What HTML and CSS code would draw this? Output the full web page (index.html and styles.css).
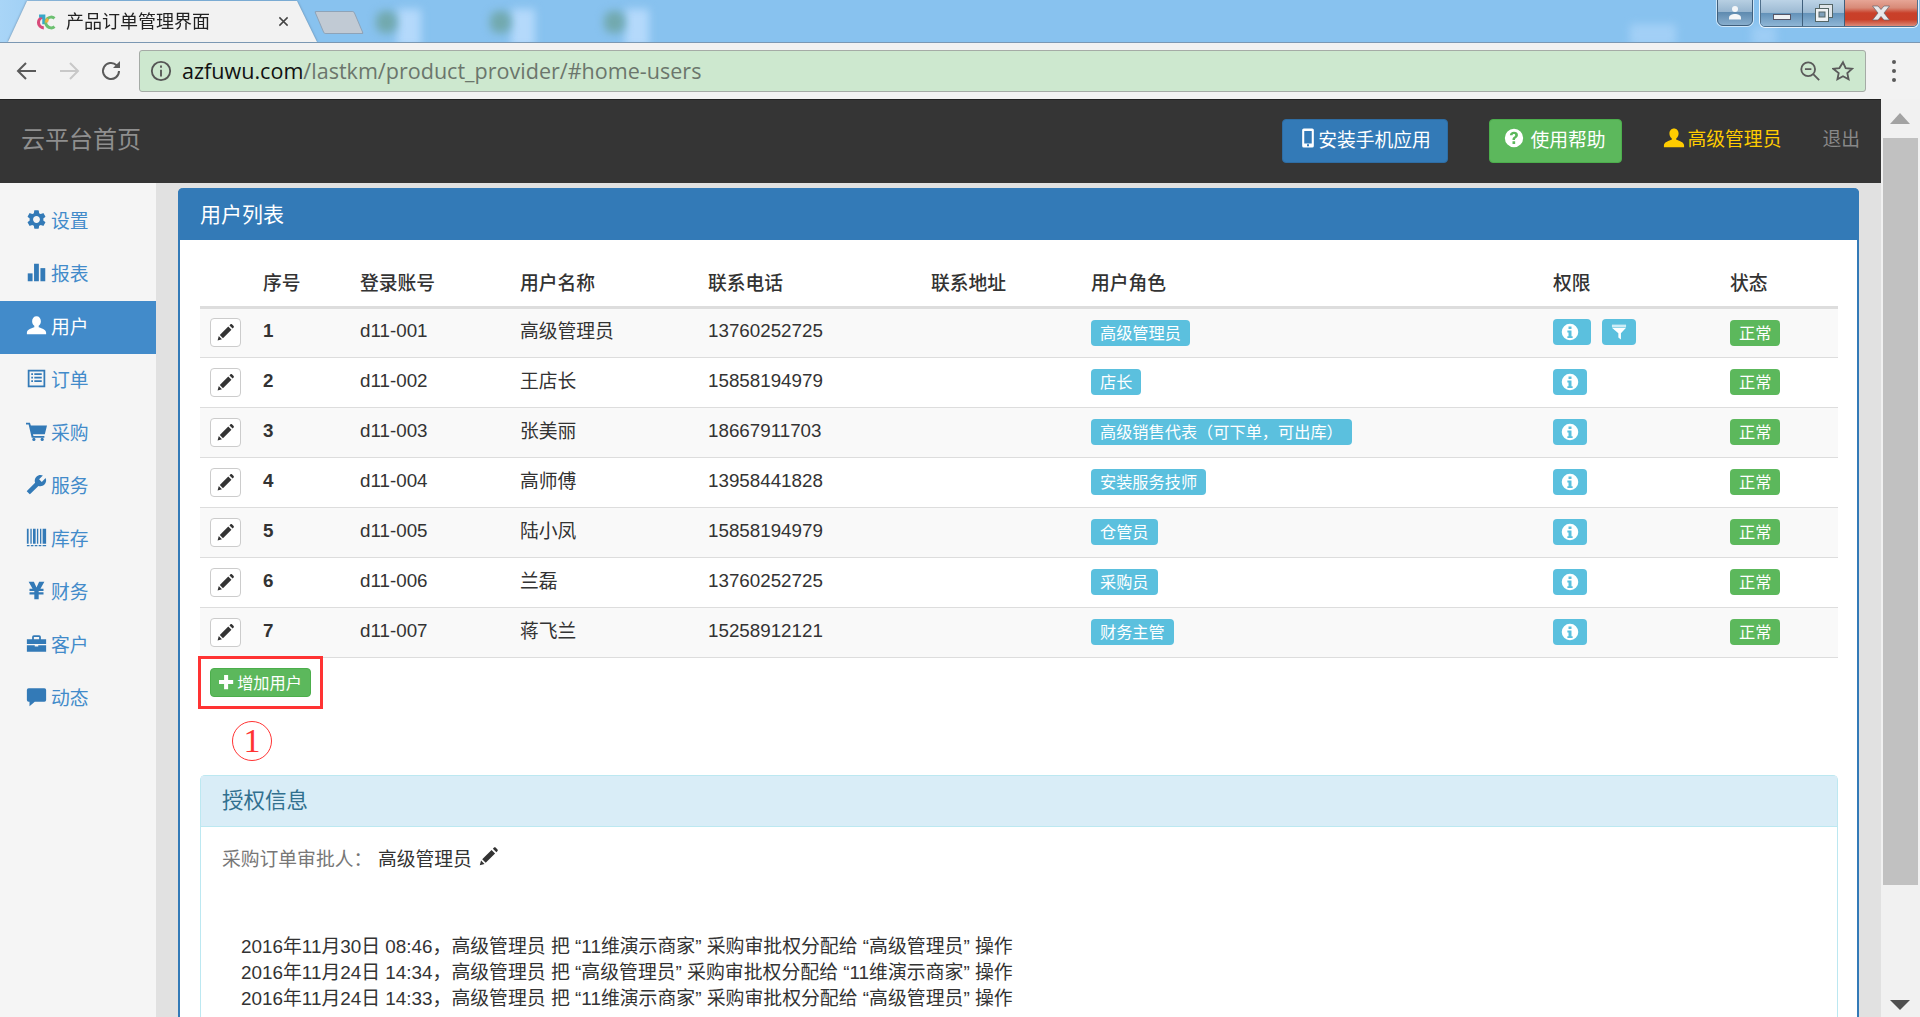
FILE: index.html
```html
<!DOCTYPE html>
<html lang="zh-CN">
<head>
  <meta charset="UTF-8" />
  <title>产品订单管理界面</title>
  <link rel="stylesheet" href="styles.css">
</head>
<body>
  <svg class="sprite" aria-hidden="true">
    <symbol id="i-cog" viewBox="1 1 22 22"><path d="M19.14 12.94c.04-.3.06-.61.06-.94 0-.32-.02-.64-.07-.94l2.03-1.58a.49.49 0 0 0 .12-.61l-1.92-3.32a.488.488 0 0 0-.59-.22l-2.39.96c-.5-.38-1.03-.7-1.62-.94l-.36-2.54a.484.484 0 0 0-.48-.41h-3.84c-.24 0-.43.17-.47.41l-.36 2.54c-.59.24-1.13.57-1.62.94l-2.39-.96c-.22-.08-.47 0-.59.22L2.74 8.87c-.12.21-.08.47.12.61l2.03 1.58c-.05.3-.09.63-.09.94s.02.64.07.94l-2.03 1.58a.49.49 0 0 0-.12.61l1.92 3.32c.12.22.37.29.59.22l2.39-.96c.5.38 1.03.7 1.62.94l.36 2.54c.05.24.24.41.48.41h3.84c.24 0 .44-.17.47-.41l.36-2.54c.59-.24 1.13-.56 1.62-.94l2.39.96c.22.08.47 0 .59-.22l1.92-3.32c.12-.22.07-.47-.12-.61l-2.01-1.58zM12 15.6c-1.98 0-3.6-1.62-3.6-3.6s1.62-3.6 3.6-3.6 3.6 1.62 3.6 3.6-1.62 3.6-3.6 3.6z"/></symbol>
    <symbol id="i-stats" viewBox="0 0 24 24"><rect x="2" y="13" width="5.5" height="9"/><rect x="9.2" y="2" width="5.5" height="20"/><rect x="16.5" y="7" width="5.5" height="15"/></symbol>
    <symbol id="i-user" viewBox="0 0 24 24"><path d="M12 1.500c-3 0-5 2.400-5 5.600 0 2.300 1 4.200 2.500 5.200v1.700c-2.500 1-8.500 2.400-8.500 6.200v1.800h22V20.200c0-3.800-6-5.200-8.500-6.200v-1.700c1.500-1 2.500-2.900 2.500-5.200C17 3.900 15 1.500 12 1.500z"/></symbol>
    <symbol id="i-list" viewBox="0 0 24 24"><path fill-rule="evenodd" d="M2 2h20v20H2zM4 4v16h16V4zM6 6h2v2H6zM9.500 6H18v2H9.500zM6 10h2v2H6zM9.500 10H18v2H9.500zM6 14h2v2H6zM9.500 14H18v2H9.500z"/></symbol>
    <symbol id="i-cart" viewBox="0 0 24 24"><path d="M0 2h4.500l1 3H24l-2.500 10H8l.5 2H21v2H6.500L3 4H0z"/><circle cx="9" cy="21" r="1.800"/><circle cx="18.500" cy="21" r="1.800"/></symbol>
    <symbol id="i-wrench" viewBox="0 0 24 24"><path transform="translate(24 0) scale(-1 1)" d="M22.700 19l-9.100-9.100c.9-2.300.4-5-1.500-6.900-2-2-5-2.400-7.400-1.300L9 6 6 9 1.600 4.700C.4 7.100.9 10.100 2.900 12.100c1.900 1.900 4.600 2.400 6.900 1.500l9.100 9.100c.4.400 1 .4 1.400 0l2.300-2.300c.5-.4.5-1.100.1-1.400z"/></symbol>
    <symbol id="i-barcode" viewBox="0 0 24 24"><path d="M1 2h2v17H1zM5 2h1.500v17H5zM8 2h3v17H8zM12.500 2H14v17h-1.500zM16 2h1.500v17H16zM19 2h4v17h-4zM1 20.500h3V22H1zM5.500 20.500h3V22h-3zM10 20.500h3V22h-3zM14.500 20.500h3V22h-3zM19 20.500h4V22h-4z"/></symbol>
    <symbol id="i-yen" viewBox="0 0 24 24"><path d="M3 2h6l3 6.500L15 2h6l-4.500 8H20v2.500h-5.500V14H20v2.500h-5.500V22h-5v-5.500H4V14h5.500v-1.500H4V10h3.500z"/></symbol>
    <symbol id="i-case" viewBox="0 0 24 24"><path fill-rule="evenodd" d="M9 2.500h6a2 2 0 0 1 2 2V7h6v5.500H1V7h6V4.500a2 2 0 0 1 2-2zM9 4.500V7h6V4.500zM1 14h9v1.500h4V14h9v7.500H1z"/></symbol>
    <symbol id="i-comment" viewBox="0 0 24 24"><path d="M3 2.500h18a2 2 0 0 1 2 2V16a2 2 0 0 1-2 2H10l-6 5v-5H3a2 2 0 0 1-2-2V4.500a2 2 0 0 1 2-2z"/></symbol>
    <symbol id="i-pencil" viewBox="0 0 24 24"><path d="M2 22l1.500-5.500 4 4zM4.800 15.200L15.500 4.500l4 4L8.800 19.200zM17 3l1.300-1.300c.5-.5 1.300-.5 1.800 0l2.200 2.200c.5.500.5 1.300 0 1.800L21 7z"/></symbol>
    <symbol id="i-plus" viewBox="0 0 24 24"><path d="M9 1.500h6V9h7.500v6H15v7.500H9V15H1.500V9H9z"/></symbol>
    <symbol id="i-info" viewBox="0 0 24 24"><path fill-rule="evenodd" d="M12 1a11 11 0 1 0 0 22 11 11 0 0 0 0-22zM10 4.500h4v3.500h-4zM8.500 10H14v7.500h1.500V20h-7v-2.500H10V12.500H8.500z"/></symbol>
    <symbol id="i-filter" viewBox="-2 0 28 25"><path opacity=".7" d="M1 1h22v4H1z"/><path d="M1 6h22l-8 8.500V24l-4-3v-6.500z"/></symbol>
    <symbol id="i-question" viewBox="0 0 24 24"><path fill-rule="evenodd" d="M12 1a11 11 0 1 0 0 22 11 11 0 0 0 0-22zM12 4.500c-3 0-4.800 1.600-5 4.300h3.200c.1-1 .7-1.500 1.700-1.500s1.600.5 1.600 1.300c0 .7-.4 1.100-1.300 1.800-1.400 1-2 1.800-2 3.400v.6h3v-.4c0-.9.3-1.300 1.300-2 1.300-1 2.200-1.900 2.200-3.700 0-2.300-1.900-3.800-4.700-3.800zM10.200 16h3.200v3.200h-3.200z"/></symbol>
    <symbol id="i-phone" viewBox="0 0 24 24"><path fill-rule="evenodd" d="M7 0.500h10a2 2 0 0 1 2 2v19a2 2 0 0 1-2 2H7a2 2 0 0 1-2-2v-19a2 2 0 0 1 2-2zM7.500 3.500v15h9v-15zM10.800 19.500h2.400v2.400h-2.400z"/></symbol>
  </svg>

  <header class="tabstrip">
    <div class="tab-wrap">
      <div class="tab">
        <svg class="favicon" viewBox="0 0 20 16">
          <path d="M9 3.500a4.500 4.500 0 1 0 0 9" stroke="#d84a7a"/>
          <path d="M5 2.500h4v7" stroke="#37a8c8"/>
          <path d="M18 4.500a4.500 4.500 0 1 0 0 7" stroke="#6cc070"/>
          <path d="M11.500 8a3 3 0 0 1 1-3" stroke="#f0b040"/>
        </svg>
        <span class="tab-title">产品订单管理界面</span>
        <svg class="tab-close" viewBox="0 0 12 12"><path d="M1.500 1.500l9 9M10.500 1.500l-9 9"/></svg>
      </div>
    </div>
    <div class="new-tab"></div>
    <i class="blob dark blob-a"></i><i class="blob pale blob-b"></i>
    <i class="blob dark blob-c"></i><i class="blob pale blob-d"></i>
    <i class="blob dark blob-e"></i><i class="blob pale blob-f"></i>
    <i class="blob pale blob-g"></i><i class="blob pale blob-h"></i>
    <div class="win-user">
      <svg viewBox="0 0 18 18"><circle cx="9" cy="5" r="3"/><path d="M3 14c0-3 3-4 6-4s6 1 6 4v1.500H3z"/></svg>
    </div>
    <div class="win-btns">
      <div class="win-btn"><span class="win-min"></span></div>
      <div class="win-btn">
        <svg class="win-max" viewBox="0 0 20 20"><rect x="5.500" y="1.500" width="13" height="13"/><rect class="front" x="1.500" y="5.500" width="13" height="13"/><rect class="hole" x="5" y="9" width="6" height="5"/></svg>
      </div>
      <div class="win-btn win-close"><svg viewBox="0 0 20 16"><path d="M1.500 1h5.500l3 3.500L13 1h5.500l-5.500 7 5.500 7H13l-3-3.500L7 15H1.500L7 8z"/></svg></div>
    </div>
  </header>

  <div class="toolbar">
    <svg class="tool-icon" viewBox="0 0 24 24"><path d="M21 12H4M11 4l-8 8 8 8"/></svg>
    <svg class="tool-icon off" viewBox="0 0 24 24"><path d="M3 12h17M13 4l8 8-8 8"/></svg>
    <svg class="tool-icon" viewBox="0 0 24 24"><path d="M20 12a8 8 0 1 1-2.400-5.700"/><path class="solid" d="M21 2v7h-7z"/></svg>
    <div class="omnibox">
      <svg class="omni-info" viewBox="0 0 24 24"><circle cx="12" cy="12" r="10"/><path d="M12 10.500V18M12 6v2.500"/></svg>
      <span class="url"><b>azfuwu.com</b>/lastkm/product_provider/#home-users</span>
      <svg class="omni-icon" viewBox="0 0 24 24"><circle cx="10" cy="10" r="7.500"/><path d="M6.500 10h7M15.500 15.500L22 22"/></svg>
      <svg class="omni-icon" viewBox="0 0 24 24"><path d="M12 2.500l2.900 6.300 6.900.8-5.100 4.700 1.400 6.800-6.100-3.400-6.100 3.400 1.400-6.800L1.200 9.600l6.900-.8z"/></svg>
    </div>
    <div class="menu-dots"><i></i><i></i><i></i></div>
  </div>

  <div class="viewport">
    <div class="site">
      <nav class="navbar">
        <a class="brand">云平台首页</a>
        <div class="nav-right">
          <a class="nav-btn blue"><svg class="ico"><use href="#i-phone"/></svg>安装手机应用</a>
          <a class="nav-btn green"><svg class="ico q"><use href="#i-question"/></svg>使用帮助</a>
          <a class="nav-user"><svg class="ico"><use href="#i-user"/></svg>高级管理员</a>
          <a class="nav-exit">退出</a>
        </div>
      </nav>

      <div class="main">
        <aside class="sidebar">
          <a class="side-item"><svg class="ico"><use href="#i-cog"/></svg>设置</a>
          <a class="side-item"><svg class="ico"><use href="#i-stats"/></svg>报表</a>
          <a class="side-item active"><svg class="ico"><use href="#i-user"/></svg>用户</a>
          <a class="side-item"><svg class="ico"><use href="#i-list"/></svg>订单</a>
          <a class="side-item"><svg class="ico"><use href="#i-cart"/></svg>采购</a>
          <a class="side-item"><svg class="ico"><use href="#i-wrench"/></svg>服务</a>
          <a class="side-item"><svg class="ico"><use href="#i-barcode"/></svg>库存</a>
          <a class="side-item"><svg class="ico"><use href="#i-yen"/></svg>财务</a>
          <a class="side-item"><svg class="ico"><use href="#i-case"/></svg>客户</a>
          <a class="side-item"><svg class="ico"><use href="#i-comment"/></svg>动态</a>
        </aside>

        <section class="content">
          <div class="panel">
            <div class="panel-head">用户列表</div>
            <div class="panel-body">
              <table class="users">
                <colgroup>
                  <col class="c-edit"><col class="c-seq"><col class="c-acct"><col class="c-name"><col class="c-tel">
                  <col class="c-addr"><col class="c-role"><col class="c-perm"><col class="c-state">
                </colgroup>
                <thead>
                  <tr><th></th><th>序号</th><th>登录账号</th><th>用户名称</th><th>联系电话</th><th>联系地址</th><th>用户角色</th><th>权限</th><th>状态</th></tr>
                </thead>
                <tbody>
                  <tr>
                    <td><button class="edit"><svg class="ico"><use href="#i-pencil"/></svg></button></td>
                    <td class="seq">1</td><td>d11-001</td><td>高级管理员</td><td>13760252725</td><td></td>
                    <td><span class="label info">高级管理员</span></td>
                    <td class="perm"><span class="label info icon wide"><svg class="ico"><use href="#i-info"/></svg></span><span class="label info icon"><svg class="ico"><use href="#i-filter"/></svg></span></td>
                    <td><span class="label ok">正常</span></td>
                  </tr>
                  <tr>
                    <td><button class="edit"><svg class="ico"><use href="#i-pencil"/></svg></button></td>
                    <td class="seq">2</td><td>d11-002</td><td>王店长</td><td>15858194979</td><td></td>
                    <td><span class="label info">店长</span></td>
                    <td class="perm"><span class="label info icon"><svg class="ico"><use href="#i-info"/></svg></span></td>
                    <td><span class="label ok">正常</span></td>
                  </tr>
                  <tr>
                    <td><button class="edit"><svg class="ico"><use href="#i-pencil"/></svg></button></td>
                    <td class="seq">3</td><td>d11-003</td><td>张美丽</td><td>18667911703</td><td></td>
                    <td><span class="label info">高级销售代表（可下单，可出库）</span></td>
                    <td class="perm"><span class="label info icon"><svg class="ico"><use href="#i-info"/></svg></span></td>
                    <td><span class="label ok">正常</span></td>
                  </tr>
                  <tr>
                    <td><button class="edit"><svg class="ico"><use href="#i-pencil"/></svg></button></td>
                    <td class="seq">4</td><td>d11-004</td><td>高师傅</td><td>13958441828</td><td></td>
                    <td><span class="label info">安装服务技师</span></td>
                    <td class="perm"><span class="label info icon"><svg class="ico"><use href="#i-info"/></svg></span></td>
                    <td><span class="label ok">正常</span></td>
                  </tr>
                  <tr>
                    <td><button class="edit"><svg class="ico"><use href="#i-pencil"/></svg></button></td>
                    <td class="seq">5</td><td>d11-005</td><td>陆小凤</td><td>15858194979</td><td></td>
                    <td><span class="label info">仓管员</span></td>
                    <td class="perm"><span class="label info icon"><svg class="ico"><use href="#i-info"/></svg></span></td>
                    <td><span class="label ok">正常</span></td>
                  </tr>
                  <tr>
                    <td><button class="edit"><svg class="ico"><use href="#i-pencil"/></svg></button></td>
                    <td class="seq">6</td><td>d11-006</td><td>兰磊</td><td>13760252725</td><td></td>
                    <td><span class="label info">采购员</span></td>
                    <td class="perm"><span class="label info icon"><svg class="ico"><use href="#i-info"/></svg></span></td>
                    <td><span class="label ok">正常</span></td>
                  </tr>
                  <tr>
                    <td><button class="edit"><svg class="ico"><use href="#i-pencil"/></svg></button></td>
                    <td class="seq">7</td><td>d11-007</td><td>蒋飞兰</td><td>15258912121</td><td></td>
                    <td><span class="label info">财务主管</span></td>
                    <td class="perm"><span class="label info icon"><svg class="ico"><use href="#i-info"/></svg></span></td>
                    <td><span class="label ok">正常</span></td>
                  </tr>
                </tbody>
              </table>

              <div class="add-row">
                <button class="add-btn"><svg class="ico"><use href="#i-plus"/></svg>增加用户</button>
                <div class="mark-box"></div>
                <div class="mark-num">1</div>
              </div>

              <div class="sub-panel">
                <div class="sub-head">授权信息</div>
                <div class="sub-body">
                  <p class="approver"><span class="muted">采购订单审批人：</span><span class="who">高级管理员</span><svg class="ico"><use href="#i-pencil"/></svg></p>
                  <ul class="log">
                    <li>2016年11月30日 08:46，高级管理员 把 “11维演示商家” 采购审批权分配给 “高级管理员” 操作</li>
                    <li>2016年11月24日 14:34，高级管理员 把 “高级管理员” 采购审批权分配给 “11维演示商家” 操作</li>
                    <li>2016年11月24日 14:33，高级管理员 把 “11维演示商家” 采购审批权分配给 “高级管理员” 操作</li>
                  </ul>
                </div>
              </div>
            </div>
          </div>
        </section>
      </div>
    </div>

    <div class="scrollbar">
      <div class="arrow up"></div>
      <div class="thumb"></div>
      <div class="arrow down"></div>
    </div>
  </div>
</body>
</html>
```
FILE: styles.css
```css
* {
  box-sizing: border-box;
}

html, body {
  height: 100%;
}

body {
  margin: 0;
  display: flex;
  flex-direction: column;
  overflow: hidden;
  font-family: "Liberation Sans", "Noto Sans CJK SC", sans-serif;
  font-size: 18.8px;
  color: #333;
  background: #fff;
}

.sprite {
  display: none;
}

.ico {
  width: 1em;
  height: 1em;
  fill: currentColor;
  flex: none;
}

/* browser window */
.tabstrip {
  position: relative;
  height: 43px;
  flex: none;
  padding: 1px 0 0 8px;
  display: flex;
  background: linear-gradient(90deg, #a9d5f7 0, #88c2ef 6%, #88c2ef 100%);
  border-bottom: 1px solid #7b98b3;
  overflow: hidden;
}

.tab-wrap {
  filter: drop-shadow(0 0 1px #5f7f9c);
}

.tab {
  width: 309px;
  height: 41px;
  padding: 0 28px 3px 25px;
  display: flex;
  align-items: center;
  background: #f2f2f2;
  clip-path: polygon(0 100%, 19px 0, 289px 0, 309px 100%);
}

.favicon {
  width: 24px;
  height: 19px;
  margin-right: 9px;
  margin-top: 4px;
  fill: none;
  stroke-width: 2.600;
}

.tab-title {
  font-size: 18px;
  color: #222;
}

.tab-close {
  width: 11px;
  height: 11px;
  margin-left: auto;
  margin-top: 3px;
  fill: none;
  stroke: #444;
  stroke-width: 1.600;
}

.new-tab {
  width: 40px;
  height: 23px;
  margin: 10px 0 0 2px;
  background: #c1cad4;
  border: 1px solid #8ea3b8;
  border-radius: 2px;
  transform: skewX(23deg);
}

.blob {
  position: absolute;
  filter: blur(4px);
}

.blob.dark {
  top: 11px;
  width: 21px;
  height: 22px;
  background: #72a9ae;
  border-radius: 40%;
}

.blob.pale {
  top: 9px;
  width: 24px;
  height: 38px;
  background: #b4d9fb;
  z-index: 0;
}

.blob-a { left: 376px; z-index: 1; }
.blob-b { left: 397px; }
.blob-c { left: 490px; z-index: 1; }
.blob-d { left: 511px; }
.blob-e { left: 604px; z-index: 1; }
.blob-f { left: 625px; }
.blob.blob-g { left: 1630px; top: 24px; width: 46px; height: 22px; opacity: .6; }
.blob.blob-h { left: 1752px; top: 26px; height: 20px; opacity: .5; }

.win-user {
  position: absolute;
  top: -1px;
  left: 1717px;
  width: 36px;
  height: 27px;
  display: flex;
  align-items: center;
  justify-content: center;
  background: linear-gradient(#b7cfe2 0, #96b5cf 48%, #5f8bb0 50%, #88aecd 100%);
  border: 1px solid #3f5f7c;
  border-radius: 0 0 6px 6px;
  box-shadow: 0 0 0 1px rgba(255, 255, 255, .6);
  z-index: 2;
}

.win-user svg {
  width: 18px;
  height: 18px;
  fill: #f4f6f8;
}

.win-btns {
  position: absolute;
  top: -1px;
  left: 1760px;
  display: flex;
  height: 28px;
  border: 1px solid #50708c;
  border-radius: 0 0 5px 5px;
  box-shadow: 0 0 0 1px rgba(255, 255, 255, .8);
  overflow: hidden;
  z-index: 2;
}

.win-btn {
  width: 42px;
  display: flex;
  align-items: center;
  justify-content: center;
  background: linear-gradient(#bcd3e6 0, #9dbad3 48%, #6291b8 50%, #8fb6d6 100%);
  border-right: 1px solid #3f5f7c;
}

.win-min {
  width: 18px;
  height: 6px;
  margin-top: 8px;
  background: #eef1f4;
  border: 1px solid #556;
}

.win-max {
  width: 20px;
  height: 20px;
  fill: #dfe5ea;
  stroke: #566;
  stroke-width: 1;
}

.win-max .front {
  fill: #eef1f4;
}

.win-max .hole {
  fill: #7f9fba;
}

.win-close {
  width: 72px;
  border: 0;
  background: linear-gradient(#e6a596 0, #d88a78 30%, #c9402a 50%, #c93f28 75%, #dc8a78 100%);
}

.win-close svg {
  width: 20px;
  height: 16px;
  fill: #e8e8ea;
  stroke: #66666e;
  stroke-width: .7;
}

.toolbar {
  height: 56px;
  flex: none;
  display: flex;
  align-items: center;
  padding: 0 0 0 15px;
  background: #f2f2f2;
}

.tool-icon {
  width: 24px;
  height: 24px;
  margin-right: 18px;
  fill: none;
  stroke: #5a5a5a;
  stroke-width: 2;
}

.tool-icon.off {
  stroke: #c8c8c8;
}

.tool-icon .solid {
  fill: #5a5a5a;
  stroke: none;
}

.omnibox {
  width: 1727px;
  height: 42px;
  margin-left: -2px;
  display: flex;
  align-items: center;
  padding: 0 0 0 10px;
  background: #cde8cf;
  border: 1px solid #a5aba6;
  border-radius: 3px;
}

.omni-info {
  width: 22px;
  height: 22px;
  fill: none;
  stroke: #555;
  stroke-width: 2;
}

.url {
  flex: 1;
  margin-left: 10px;
  padding-bottom: 1px;
  font-family: "Open Sans", "Liberation Sans", sans-serif;
  font-size: 21.550px;
  color: #6b766c;
}

.url b {
  font-weight: normal;
  color: #111;
}

.omni-icon {
  width: 22px;
  height: 22px;
  margin-right: 11px;
  fill: none;
  stroke: #5a5a5a;
  stroke-width: 2;
}

.menu-dots {
  margin-left: 26px;
  display: flex;
  flex-direction: column;
  gap: 5px;
}

.menu-dots i {
  width: 4px;
  height: 4px;
  border-radius: 50%;
  background: #5a5a5a;
}

/* page */
.viewport {
  flex: 1;
  min-height: 0;
  display: flex;
}

.site {
  flex: 1;
  min-width: 0;
  display: flex;
  flex-direction: column;
}

.navbar {
  height: 84px;
  flex: none;
  display: flex;
  align-items: center;
  justify-content: space-between;
  padding: 0 21px 2px 21px;
  background: #353535;
  border-top: 1px solid #222;
}

.brand {
  padding-bottom: 6px;
  font-family: "Liberation Serif", "Noto Sans CJK SC", serif;
  font-size: 24px;
  color: #8f8f8f;
}

.nav-right {
  display: flex;
  align-items: center;
  gap: 41px;
}

.nav-btn {
  height: 44px;
  display: flex;
  align-items: center;
  justify-content: center;
  padding-bottom: 5px;
  color: #fff;
  border-radius: 4px;
}

.nav-btn .ico {
  width: 20px;
  height: 20px;
}

.nav-btn.blue {
  width: 166px;
  background: #337ab7;
  border: 1px solid #2e6da4;
}

.nav-btn.green {
  width: 133px;
  background: #5cb85c;
  border: 1px solid #4cae4c;
}

.nav-btn .ico.q {
  margin-right: 6px;
}

.nav-user {
  display: flex;
  align-items: center;
  gap: 3px;
  padding-bottom: 6px;
  color: #fc0;
}

.nav-user .ico {
  width: 22px;
  height: 22px;
}

.nav-exit {
  padding-bottom: 6px;
  color: #888;
}

.main {
  flex: 1;
  min-height: 0;
  display: flex;
}

.sidebar {
  width: 156px;
  flex: none;
  padding-top: 12px;
  background: #f5f5f5;
}

.side-item {
  height: 53px;
  display: flex;
  align-items: center;
  gap: 4px;
  padding: 0 0 5px 26px;
  color: #428bca;
}

.side-item .ico {
  color: #337ab7;
  width: 21px;
  height: 21px;
}

.side-item.active {
  background: #428bca;
  color: #fff;
}

.side-item.active .ico {
  color: #fff;
}

.content {
  flex: 1;
  min-width: 0;
  padding: 5px 22px 0 22px;
  background: #e1e1e1;
}

.panel {
  height: 100%;
  background: #fff;
  border: solid #337ab7;
  border-width: 0 2px;
  border-radius: 5px 5px 0 0;
}

.panel-head {
  height: 52px;
  margin: 0 -2px;
  padding: 0 22px 2px;
  display: flex;
  align-items: center;
  font-size: 21px;
  color: #fff;
  background: #337ab7;
  border-radius: 5px 5px 0 0;
}

.panel-body {
  padding: 18px 19px 0 20px;
}

.users {
  width: 100%;
  table-layout: fixed;
  border-collapse: collapse;
}

.c-edit { width: 53px; }
.c-seq { width: 97px; }
.c-acct { width: 160px; }
.c-name { width: 188px; }
.c-tel { width: 223px; }
.c-addr { width: 160px; }
.c-role { width: 462px; }
.c-perm { width: 177px; }

.users th {
  height: 49px;
  padding: 0 10px 1px;
  text-align: left;
  font-weight: 500;
  border-bottom: 3px solid #ddd;
}

.users td {
  height: 50px;
  padding: 0 10px;
  border-bottom: 1px solid #ddd;
}

.users td:nth-child(2),
.users td:nth-child(3),
.users td:nth-child(5) {
  padding-bottom: 3px;
}

.users td:nth-child(4) {
  padding-bottom: 6px;
}

.users tbody tr:nth-child(odd) {
  background: #f9f9f9;
}

.users .seq {
  font-weight: bold;
}

.edit {
  width: 31px;
  height: 29px;
  padding: 0;
  display: flex;
  align-items: center;
  justify-content: center;
  color: #333;
  font-size: 19px;
  background: #fff;
  border: 1px solid #ccc;
  border-radius: 4px;
}

.label {
  height: 26px;
  display: inline-flex;
  align-items: center;
  padding: 0 9px 2px;
  font-size: 16.200px;
  color: #fff;
  border-radius: 4px;
}

.label.info {
  background: #5bc0de;
}

.label.ok {
  background: #5cb85c;
}

.label.icon {
  width: 34px;
  padding: 0;
  justify-content: center;
}

.label.icon .ico {
  width: 18px;
  height: 18px;
}

.label.icon.wide {
  width: 38px;
  margin-right: 11px;
  padding-right: 4px;
}

.add-row {
  position: relative;
  height: 117px;
  padding: 10px 0 0 10px;
}

.add-btn {
  width: 101px;
  height: 29px;
  display: flex;
  align-items: center;
  gap: 3px;
  padding: 0 0 0 7px;
  font-family: inherit;
  font-size: 16.200px;
  color: #fff;
  background: #5cb85c;
  border: 1px solid #4cae4c;
  border-radius: 4px;
}

.mark-box {
  position: absolute;
  top: -2px;
  left: -2px;
  width: 125px;
  height: 53px;
  border: 3px solid #f33;
}

.mark-num {
  position: absolute;
  top: 63px;
  left: 32px;
  width: 40px;
  height: 40px;
  display: flex;
  align-items: center;
  justify-content: center;
  font-family: "Liberation Serif", serif;
  font-size: 34px;
  color: #f33;
  border: 1px solid #f33;
  border-radius: 50%;
}

.sub-panel {
  border: 1px solid #bce8f1;
  border-bottom: 0;
  border-radius: 5px 5px 0 0;
  height: 242px;
}

.sub-head {
  height: 51px;
  padding: 0 21px 4px;
  display: flex;
  align-items: center;
  font-size: 21.500px;
  color: #31708f;
  background: #d9edf7;
  border-bottom: 1px solid #bce8f1;
}

.sub-body {
  padding: 20px 21px 0;
}

.approver {
  margin: 0;
  display: flex;
  align-items: center;
  height: 22px;
}

.muted {
  color: #777;
  width: 156px;
  flex: none;
  white-space: nowrap;
}

.who {
  margin-right: 6px;
}

.approver .ico {
  width: 21px;
  height: 21px;
  margin-top: -3px;
}

.log {
  margin: 65px 0 0;
  padding: 0 0 0 19px;
  list-style: none;
  font-size: 18.860px;
}

.log li {
  height: 26px;
  line-height: 26px;
  white-space: nowrap;
}

.scrollbar {
  position: relative;
  width: 39px;
  flex: none;
  background: #f1f1f1;
}

.thumb {
  position: absolute;
  top: 39px;
  left: 2px;
  width: 35px;
  height: 747px;
  background: #c1c1c1;
}

.arrow {
  position: absolute;
  left: 9px;
  width: 0;
  height: 0;
  border-left: 10px solid transparent;
  border-right: 10px solid transparent;
}

.arrow.up {
  top: 14px;
  border-bottom: 11px solid #a3a3a3;
}

.arrow.down {
  bottom: 7px;
  border-top: 10px solid #505050;
}
```
